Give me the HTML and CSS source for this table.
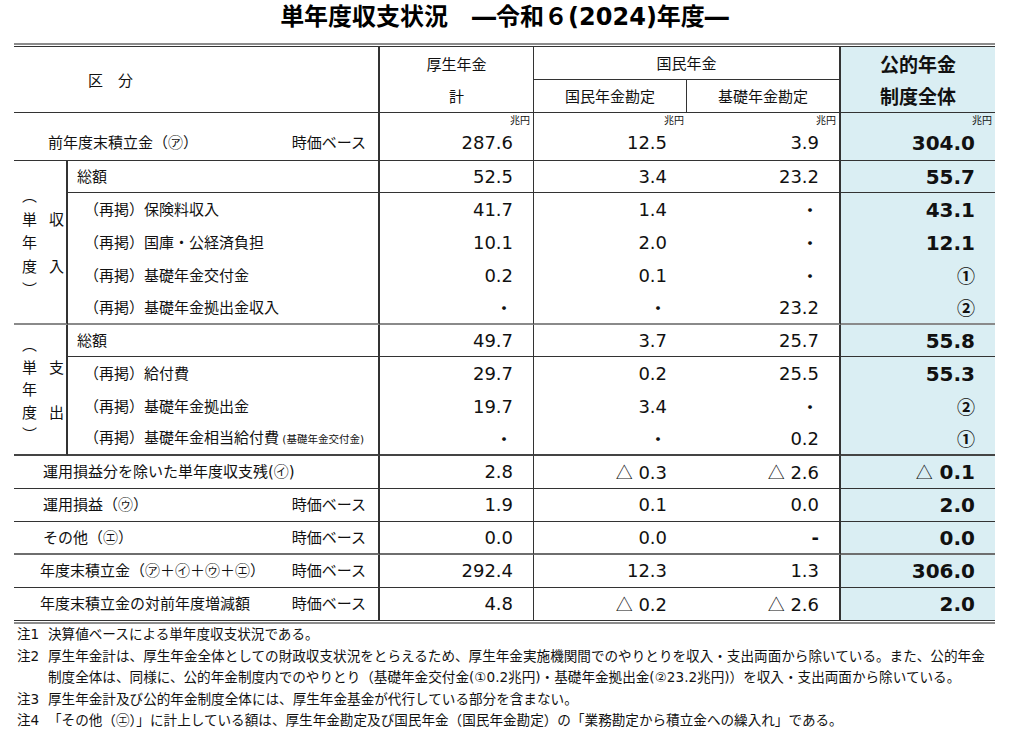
FILE: index.html
```html
<!DOCTYPE html>
<html lang="ja">
<head>
<meta charset="utf-8">
<title>単年度収支状況</title>
<link rel="stylesheet" href="styles.css">
</head>
<body>
<div class="page">
  <h1 class="title">単年度収支状況　―令和６(2024)年度―</h1>
  <div class="rule-top"></div>
  <table class="tbl">
    <colgroup>
      <col class="c-side"><col class="c-label"><col class="c-num"><col class="c-num2"><col class="c-num"><col class="c-num">
    </colgroup>
    <thead>
      <tr class="h1">
        <th colspan="2" rowspan="2" class="kubun br2">区　分</th>
        <th class="br1">厚生年金</th>
        <th colspan="2" class="kokumin br2">国民年金</th>
        <th class="tot-h">公的年金</th>
      </tr>
      <tr class="h2">
        <th class="br1 hb">計</th>
        <th class="br1 hb">国民年金勘定</th>
        <th class="br2 hb">基礎年金勘定</th>
        <th class="tot-h hb">制度全体</th>
      </tr>
    </thead>
    <tbody>
      <tr class="r0 bl">
        <td colspan="2" class="lab br2 first"><div class="split"><span>前年度末積立金（㋐）</span><span>時価ベース</span></div></td>
        <td class="nu br1"><div class="unit">兆円</div><div class="val">287.6</div></td>
        <td class="nu"><div class="unit">兆円</div><div class="val">12.5</div></td>
        <td class="nu br2"><div class="unit">兆円</div><div class="val">3.9</div></td>
        <td class="nu tot"><div class="unit">兆円</div><div class="val">304.0</div></td>
      </tr>
      <tr class="r32 bl">
        <td rowspan="5" class="side br2 side-g">
          <div class="vt vt-in">
            <span>︵</span><span></span>
            <span>単</span><span>収</span>
            <span>年</span><span></span>
            <span>度</span><span>入</span>
            <span>︶</span><span></span>
          </div>
        </td>
        <td class="lab br2 sum">総額</td>
        <td class="n br1">52.5</td>
        <td class="n">3.4</td>
        <td class="n br2">23.2</td>
        <td class="n tot">55.7</td>
      </tr>
      <tr class="r33">
        <td class="lab br2 sub">（再掲）保険料収入</td>
        <td class="n br1">41.7</td>
        <td class="n">1.4</td>
        <td class="n br2"><span class="jp">・</span></td>
        <td class="n tot">43.1</td>
      </tr>
      <tr class="r33">
        <td class="lab br2 sub">（再掲）国庫・公経済負担</td>
        <td class="n br1">10.1</td>
        <td class="n">2.0</td>
        <td class="n br2"><span class="jp">・</span></td>
        <td class="n tot">12.1</td>
      </tr>
      <tr class="r33">
        <td class="lab br2 sub">（再掲）基礎年金交付金</td>
        <td class="n br1">0.2</td>
        <td class="n">0.1</td>
        <td class="n br2"><span class="jp">・</span></td>
        <td class="n tot"><span class="jp circ">①</span></td>
      </tr>
      <tr class="r33 bg">
        <td class="lab br2 sub">（再掲）基礎年金拠出金収入</td>
        <td class="n br1"><span class="jp">・</span></td>
        <td class="n"><span class="jp">・</span></td>
        <td class="n br2">23.2</td>
        <td class="n tot"><span class="jp circ">②</span></td>
      </tr>
      <tr class="r32 bl">
        <td rowspan="4" class="side br2 side-d">
          <div class="vt vt-out">
            <span>︵</span><span></span>
            <span>単</span><span>支</span>
            <span>年</span><span></span>
            <span>度</span><span>出</span>
            <span>︶</span><span></span>
          </div>
        </td>
        <td class="lab br2 sum">総額</td>
        <td class="n br1">49.7</td>
        <td class="n">3.7</td>
        <td class="n br2">25.7</td>
        <td class="n tot">55.8</td>
      </tr>
      <tr class="r33">
        <td class="lab br2 sub">（再掲）給付費</td>
        <td class="n br1">29.7</td>
        <td class="n">0.2</td>
        <td class="n br2">25.5</td>
        <td class="n tot">55.3</td>
      </tr>
      <tr class="r33">
        <td class="lab br2 sub">（再掲）基礎年金拠出金</td>
        <td class="n br1">19.7</td>
        <td class="n">3.4</td>
        <td class="n br2"><span class="jp">・</span></td>
        <td class="n tot"><span class="jp circ">②</span></td>
      </tr>
      <tr class="r33 bd">
        <td class="lab br2 sub">（再掲）基礎年金相当給付費<span class="small"> (基礎年金交付金)</span></td>
        <td class="n br1"><span class="jp">・</span></td>
        <td class="n"><span class="jp">・</span></td>
        <td class="n br2">0.2</td>
        <td class="n tot"><span class="jp circ">①</span></td>
      </tr>
      <tr class="r33 bl">
        <td colspan="2" class="lab br2 top">運用損益分を除いた単年度収支残(㋑)</td>
        <td class="n br1">2.8</td>
        <td class="n"><span class="jp tri">△</span> 0.3</td>
        <td class="n br2"><span class="jp tri">△</span> 2.6</td>
        <td class="n tot"><span class="jp tri">△</span> <b>0.1</b></td>
      </tr>
      <tr class="r33 bl">
        <td colspan="2" class="lab br2 top"><div class="split"><span>運用損益（㋒）</span><span>時価ベース</span></div></td>
        <td class="n br1">1.9</td>
        <td class="n">0.1</td>
        <td class="n br2">0.0</td>
        <td class="n tot">2.0</td>
      </tr>
      <tr class="r33 bm">
        <td colspan="2" class="lab br2 top"><div class="split"><span>その他（㋓）</span><span>時価ベース</span></div></td>
        <td class="n br1">0.0</td>
        <td class="n">0.0</td>
        <td class="n br2"><span class="dash">-</span></td>
        <td class="n tot">0.0</td>
      </tr>
      <tr class="r33 bl">
        <td colspan="2" class="lab br2 top top-n"><div class="split"><span>年度末積立金（㋐＋㋑＋㋒＋㋓）</span><span>時価ベース</span></div></td>
        <td class="n br1">292.4</td>
        <td class="n">12.3</td>
        <td class="n br2">1.3</td>
        <td class="n tot">306.0</td>
      </tr>
      <tr class="r32">
        <td colspan="2" class="lab br2 top top-n"><div class="split"><span>年度末積立金の対前年度増減額</span><span>時価ベース</span></div></td>
        <td class="n br1">4.8</td>
        <td class="n"><span class="jp tri">△</span> 0.2</td>
        <td class="n br2"><span class="jp tri">△</span> 2.6</td>
        <td class="n tot">2.0</td>
      </tr>
    </tbody>
  </table>
  <div class="rule-bottom"></div>
  <div class="notes">
    <div class="note"><span class="nl">注1</span><span class="nt">決算値ベースによる単年度収支状況である。</span></div>
    <div class="note"><span class="nl">注2</span><span class="nt">厚生年金計は、厚生年金全体としての財政収支状況をとらえるため、厚生年金実施機関間でのやりとりを収入・支出両面から除いている。また、公的年金<br>制度全体は、同様に、公的年金制度内でのやりとり（基礎年金交付金(①0.2兆円)・基礎年金拠出金(②23.2兆円)）を収入・支出両面から除いている。</span></div>
    <div class="note"><span class="nl">注3</span><span class="nt">厚生年金計及び公的年金制度全体には、厚生年金基金が代行している部分を含まない。</span></div>
    <div class="note"><span class="nl">注4</span><span class="nt">「その他（㋓）」に計上している額は、厚生年金勘定及び国民年金（国民年金勘定）の「業務勘定から積立金への繰入れ」である。</span></div>
  </div>
</div>
</body>
</html>
```

FILE: styles.css
```css
* { box-sizing: border-box; }
html, body { margin: 0; padding: 0; background: #ffffff; }
body {
  font-family: "DejaVu Sans", "Noto Sans CJK JP", sans-serif;
  color: #111111;
}
.page { width: 1012px; padding-left: 14px; }

.title {
  margin: 0;
  width: 981px;
  height: 43px;
  font-size: 24px;
  line-height: 34px;
  font-weight: bold;
  text-align: center;
  font-family: "DejaVu Sans", "Noto Sans CJK JP", sans-serif;
  color: #000;
}

.rule-top {
  width: 981px;
  height: 4px;
  border-top: 2px solid #8c8c8c;
  border-bottom: 1px solid #333333;
}
.rule-bottom {
  width: 981px;
  height: 4px;
  border-top: 1px solid #333333;
  border-bottom: 2px solid #8c8c8c;
}

.tbl {
  width: 981px;
  table-layout: fixed;
  border-collapse: separate;
  border-spacing: 0;
}
.c-side { width: 54px; }
.c-label { width: 312px; }
.c-num { width: 154px; }
.c-num2 { width: 153px; }

.tbl th, .tbl td { padding: 0; }

.tbl th {
  font-family: "Noto Sans CJK JP", sans-serif;
  font-weight: normal;
  font-size: 15px;
  line-height: 20px;
  text-align: center;
  vertical-align: middle;
}
.h1, .h2 { height: 33px; }
.tbl th.kubun { text-align: left; padding-left: 74px; border-bottom: 1px solid #333; }
.kokumin { border-bottom: 1px solid #333; }
.hb { border-bottom: 1px solid #333; }
.tbl th.tot-h {
  background: #daeef3;
  font-weight: bold;
  font-size: 19px;
}

.br1 { border-right: 1px solid #333; }
.br2 { border-right: 2px solid #333; }

.r0 { height: 48px; }
.r32 { height: 32px; }
.r33 { height: 33px; }

.bl > td:not(.side) { border-bottom: 1px solid #333; }
.bg > td { border-bottom: 2px solid #8a8a8a; }
.bd > td { border-bottom: 2px solid #444; }
.bm > td { border-bottom: 2px solid #6e6e6e; }
.side-g { border-bottom: 2px solid #8a8a8a; }
.side-d { border-bottom: 2px solid #444; }

.lab {
  font-size: 15px;
  line-height: 20px;
  vertical-align: middle;
  white-space: nowrap;
}
.tbl td.first { vertical-align: top; padding: 14px 12px 0 34px; line-height: 32px; }
.tbl td.sum { padding-left: 9px; }
.tbl td.sub { padding-left: 16px; }
.tbl td.top { padding-left: 29px; padding-right: 12px; }
.tbl td.top-n { padding-left: 26px; }
.split { display: flex; justify-content: space-between; }
.small { font-size: 10.5px; }

.tbl td.n {
  font-size: 18px;
  line-height: 22px;
  text-align: right;
  padding-right: 20px;
  vertical-align: middle;
  white-space: nowrap;
}
.tbl td.nu { vertical-align: top; padding-right: 3px; text-align: right; }
.unit {
  font-family: "Noto Sans CJK JP", sans-serif;
  font-size: 10px;
  font-weight: normal;
  line-height: 14px;
  height: 14px;
}
.val { font-size: 18px; line-height: 32px; padding-right: 17px; }
.tot { background: #daeef3; font-weight: bold; }
.tbl td.tot { font-size: 20px; }
.tot .val { font-size: 20px; }
.tot .tri { font-weight: normal; }
.tot .circ { font-weight: bold; }

.jp { font-family: "Noto Sans CJK JP", sans-serif; font-size: 18px; }
.tri { font-size: 17px; }
.dash { font-weight: bold; }

.side { vertical-align: middle; }
.vt {
  display: grid;
  grid-template-columns: 15px 15px;
  column-gap: 12px;
  padding-left: 8px;
  font-family: "Noto Sans CJK JP", sans-serif;
  font-size: 15px;
  text-align: center;
}
.vt-in { line-height: 23.5px; }
.vt-out { line-height: 22.5px; }

.notes {
  padding-left: 3px;
  font-family: "DejaVu Sans", "Noto Sans CJK JP", sans-serif;
  font-size: 13.6px;
  line-height: 21.5px;
}
.note { display: flex; }
.nl { width: 31px; flex: none; }
.nt { white-space: nowrap; }
```
